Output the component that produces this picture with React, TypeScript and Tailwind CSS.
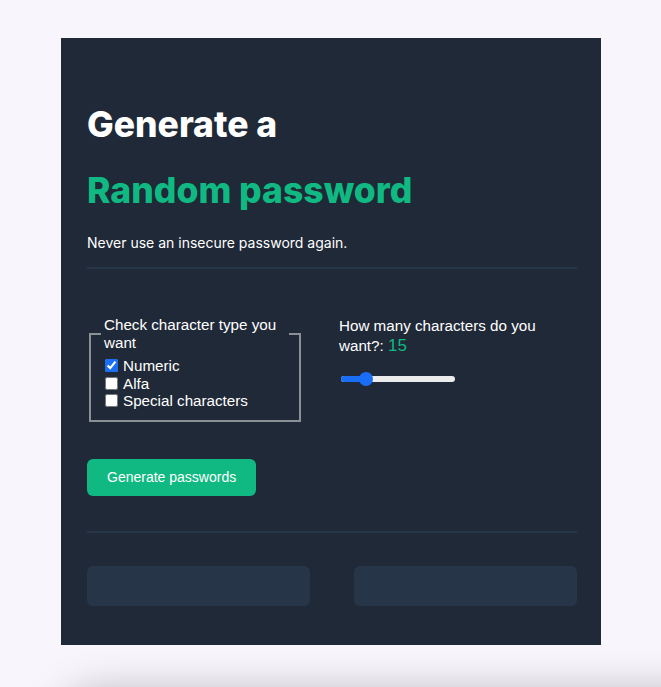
import { useState } from 'react';

export default function App() {
  const [types, setTypes] = useState({ numeric: true, alfa: false, special: false });
  const [length] = useState(15);

  // slider from 8 to 40, thumb position for the drawn range
  const pct = ((length - 8) / (40 - 8)) * 100;

  return (
    <div className="h-screen overflow-hidden bg-[#f8f5fd] pt-[38px]">
      {/* Card */}
      <div className="ml-[61px] w-[540px] bg-[#1f2937] pl-[26px] pr-[24px] pt-[65px] pb-[39px] font-['Inter',sans-serif]">
        <h1 className="text-[35.5px] leading-[44px] font-extrabold text-white">Generate a</h1>
        <h1 className="mt-[22px] text-[35.5px] leading-[44px] font-extrabold text-[#10b981]">Random password</h1>
        <p className="mt-[20px] text-[14px] leading-5 text-white">Never use an insecure password again.</p>
        <div className="mt-[14px] border-t-2 border-[#273549]"></div>

        {/* Options */}
        <div className="mt-[47px] flex items-start gap-[38px] font-['Liberation_Sans',Arial,sans-serif] text-[15.2px] text-white">
          <fieldset className="ml-[2px] w-[212px] border-2 border-[#8b8f96] px-[10px] pb-[10px]">
            <legend className="px-[3px] leading-[18px]">Check character type you want</legend>
            <div className="pt-[5px]">
              <label className="flex items-center leading-[17.5px]">
                <input
                  type="checkbox"
                  checked={types.numeric}
                  onChange={() => setTypes({ ...types, numeric: !types.numeric })}
                  className="ml-[4px] mr-[5px] h-[13px] w-[13px] accent-[#1a6ef5]"
                />
                Numeric
              </label>
              <label className="flex items-center leading-[17.5px]">
                <input
                  type="checkbox"
                  checked={types.alfa}
                  onChange={() => setTypes({ ...types, alfa: !types.alfa })}
                  className="ml-[4px] mr-[5px] h-[13px] w-[13px] accent-[#1a6ef5]"
                />
                Alfa
              </label>
              <label className="flex items-center leading-[17.5px]">
                <input
                  type="checkbox"
                  checked={types.special}
                  onChange={() => setTypes({ ...types, special: !types.special })}
                  className="ml-[4px] mr-[5px] h-[13px] w-[13px] accent-[#1a6ef5]"
                />
                Special characters
              </label>
            </div>
          </fieldset>

          <div className="flex-1">
            <p className="leading-5">
              How many characters do you want?:{' '}
              <span className="text-[17px] leading-none text-[#10b981]">{length}</span>
            </p>
            {/* Range slider */}
            <div className="relative mt-[16px] ml-[2px] h-[14px] w-[114px]">
              <div className="absolute left-0 right-0 top-[4px] h-[6px] rounded-full bg-[#ececec]"></div>
              <div
                className="absolute left-0 top-[4px] h-[6px] rounded-full bg-[#1a6ef5]"
                style={{ width: `${pct}%` }}
              ></div>
              <div
                className="absolute top-0 h-[14px] w-[14px] -translate-x-1/2 rounded-full bg-[#1a6ef5]"
                style={{ left: `${pct}%` }}
              ></div>
            </div>
          </div>
        </div>

        <button className="mt-[37px] h-[37px] rounded-[6px] bg-[#10b981] px-[20px] font-['Liberation_Sans',Arial,sans-serif] text-[14px] text-white">
          Generate passwords
        </button>

        <div className="mt-[35px] border-t-2 border-[#273549]"></div>

        {/* Password outputs */}
        <div className="mt-[33px] flex justify-between">
          <div className="h-[40px] w-[223px] rounded-[6px] bg-[#273549]"></div>
          <div className="h-[40px] w-[223px] rounded-[6px] bg-[#273549]"></div>
        </div>
      </div>

      {/* Lower window edge */}
      <div className="ml-[60px] mt-[46px] h-[200px] w-[800px] rounded-[40px] bg-[#f8f5fd] shadow-[0_0_40px_rgba(0,0,0,0.25)]"></div>
    </div>
  );
}
